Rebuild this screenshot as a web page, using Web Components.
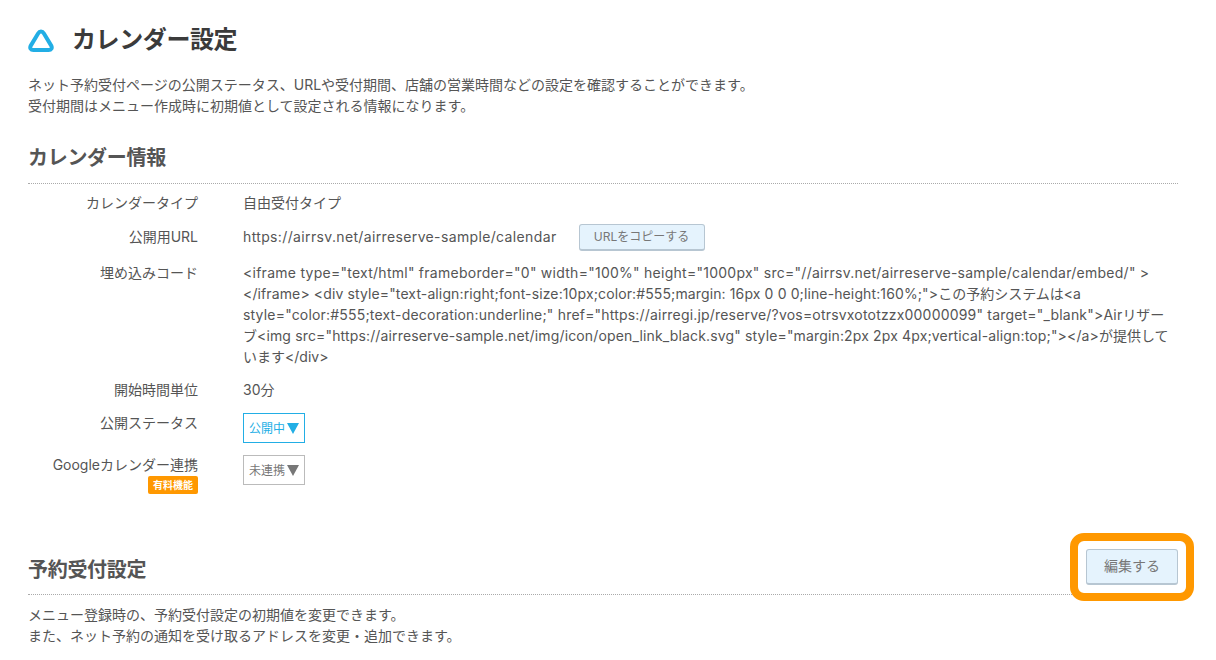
<!DOCTYPE html>
<html lang="ja"><head><meta charset="utf-8"><title>カレンダー設定</title>
<style>
html,body{margin:0;background:#fff}
body{font-family:"Inter","Noto Sans CJK JP",sans-serif;color:#555;height:660px;overflow:hidden}
.ja{letter-spacing:0}
.ln{display:block;white-space:nowrap}
</style></head><body>
<settings-page>
<page-title>カレンダー設定</page-title>
<lead-text>ネット予約受付ページの公開ステータス、URLや受付期間、店舗の営業時間などの設定を確認することができます。<br>受付期間はメニュー作成時に初期値として設定される情報になります。</lead-text>
<section-head style="--mt:28px">カレンダー情報</section-head>
<info-list>
<info-row style="--mb:13px" label="カレンダータイプ">自由受付タイプ</info-row>
<info-row style="--mb:11px" label="公開用URL"><span style="display:flex;align-items:flex-start;gap:22px"><span style="letter-spacing:.36px">https://airrsv.net/airreserve-sample/calendar</span><copy-btn style="margin-top:-2px">URLをコピーする</copy-btn></span></info-row>
<info-row style="--mb:12px" label="埋め込みコード"><span class="ln" style="letter-spacing:.26px">&lt;iframe type="text/html" frameborder="0" width="100%" height="1000px" src="//airrsv.net/airreserve-sample/calendar/embed/" &gt;</span><span class="ln" style="letter-spacing:.12px">&lt;/iframe&gt; &lt;div style="text-align:right;font-size:10px;color:#555;margin: 16px 0 0 0;line-height:160%;"&gt;<span class="ja">この予約システムは</span>&lt;a</span><span class="ln" style="letter-spacing:.19px">style="color:#555;text-decoration:underline;" href="https://airregi.jp/reserve/?vos=otrsvxototzzx00000099" target="_blank"&gt;Air<span class="ja">リザー</span></span><span class="ln" style="letter-spacing:.15px"><span class="ja">ブ</span>&lt;img src="https://airreserve-sample.net/img/icon/open_link_black.svg" style="margin:2px 2px 4px;vertical-align:top;"&gt;&lt;/a&gt;<span class="ja">が提供して</span></span><span class="ln"><span class="ja">います</span>&lt;/div&gt;</span></info-row>
<info-row style="--mb:12px" label="開始時間単位">30分</info-row>
<info-row style="--mb:11px" label="公開ステータス"><status-box active>公開中</status-box></info-row>
<info-row label="Googleカレンダー連携" paid><status-box>未連携</status-box></info-row>
</info-list>
<section-foot>
<span slot="title">予約受付設定</span>
<edit-btn slot="action">編集する</edit-btn>
</section-foot>
<lead-text style="--mt:9px">メニュー登録時の、予約受付設定の初期値を変更できます。<br>また、ネット予約の通知を受け取るアドレスを変更・追加できます。</lead-text>
</settings-page>
<script>
function def(name, css, html, extra){
  customElements.define(name, class extends HTMLElement{
    constructor(){super();const s=this.attachShadow({mode:'open'});s.innerHTML='<style>'+css+'</style>'+html;}
    connectedCallback(){if(extra)extra(this);}
  });
}
def('settings-page',':host{display:block;padding:24px 38px 0 28px}','<slot></slot>');
def('page-title',':host{display:flex;align-items:center;height:32px;gap:18px;font-size:24px;letter-spacing:-.4px;font-weight:700;color:#3b3b3b;line-height:32px}svg{display:block;width:26px;height:24px;flex:none;margin-top:1px}',
 '<svg viewBox="0 0 26 24"><path d="M13 2.6 C14.3 2.6 15.2 3.3 15.9 4.5 L23.2 16.6 C24.5 18.9 23.3 21 20.6 21 L5.4 21 C2.7 21 1.5 18.9 2.8 16.6 L10.1 4.5 C10.8 3.3 11.7 2.6 13 2.6 Z" fill="none" stroke="#22aee5" stroke-width="4" stroke-linejoin="round"/></svg><span><slot></slot></span>');
def('lead-text',':host{display:block;font-size:14px;line-height:21px;color:#555;margin-top:var(--mt,18px)}','<slot></slot>');
def('section-head',':host{display:block;margin-top:var(--mt,30px);font-size:20px;letter-spacing:-.3px;font-weight:700;line-height:28px;color:#555;padding-bottom:11px;border-bottom:1px dotted #aaa}','<slot></slot>');
def('info-list',':host{display:block;margin-top:8px}','<slot></slot>');
def('info-row',':host{display:grid;grid-template-columns:170px 925px;column-gap:45px;font-size:14px;line-height:21px;color:#555;margin-bottom:var(--mb,0);overflow-wrap:anywhere}.l{text-align:right;display:flex;flex-direction:column;align-items:flex-end}.b{display:none;margin-top:1px;background:#ff9800;color:#fff;font-size:10px;font-weight:700;line-height:18px;height:18px;padding:0 5px;border-radius:2px}:host([paid]) .b{display:block}',
 '<div class="l"><span id="t"></span><span class="b">有料機能</span></div><div><slot></slot></div>',
 el=>{el.shadowRoot.getElementById('t').textContent=el.getAttribute('label')});
def('copy-btn',':host{display:block;box-sizing:border-box;width:126px;height:27px;line-height:24px;text-align:center;font-size:12px;color:#777;background:#e5f3fd;border:1px solid #b7c6d2;border-bottom-width:2px;border-radius:3px}','<slot></slot>');
def('status-box',':host{display:flex;align-items:center;justify-content:center;gap:1px;box-sizing:border-box;width:62px;height:30px;margin-top:1px;font-size:12px;color:#777;border:1px solid #bbb}:host([active]){color:#22aee5;border-color:#22aee5}i{width:0;height:0;border-left:6px solid transparent;border-right:6px solid transparent;border-top:11px solid currentColor;margin-left:1px}',
 '<slot></slot><i></i>');
def('section-foot',':host{display:flex;position:relative;align-items:flex-end;justify-content:space-between;margin-top:55px;border-bottom:1px dotted #aaa;height:45px;font-size:20px;letter-spacing:-.3px;font-weight:700;color:#555;line-height:28px}.t{padding-bottom:10px}.a{position:absolute;right:0;top:0}',
 '<div class="t"><slot name="title"></slot></div><div class="a"><slot name="action"></slot></div>');
def('edit-btn',':host{display:block;position:relative;box-sizing:border-box;width:92px;height:36px;line-height:32px;text-align:center;font-size:14px;font-weight:400;letter-spacing:0;color:#777;background:#e5f3fd;border:1px solid #b7c6d2;border-bottom-width:2px;border-radius:3px}:host::after{content:"";position:absolute;left:-17px;top:-17px;right:-17px;bottom:-18px;border:8px solid #ff9800;border-radius:14px;pointer-events:none}','<slot></slot>');
</script>
</body></html>
